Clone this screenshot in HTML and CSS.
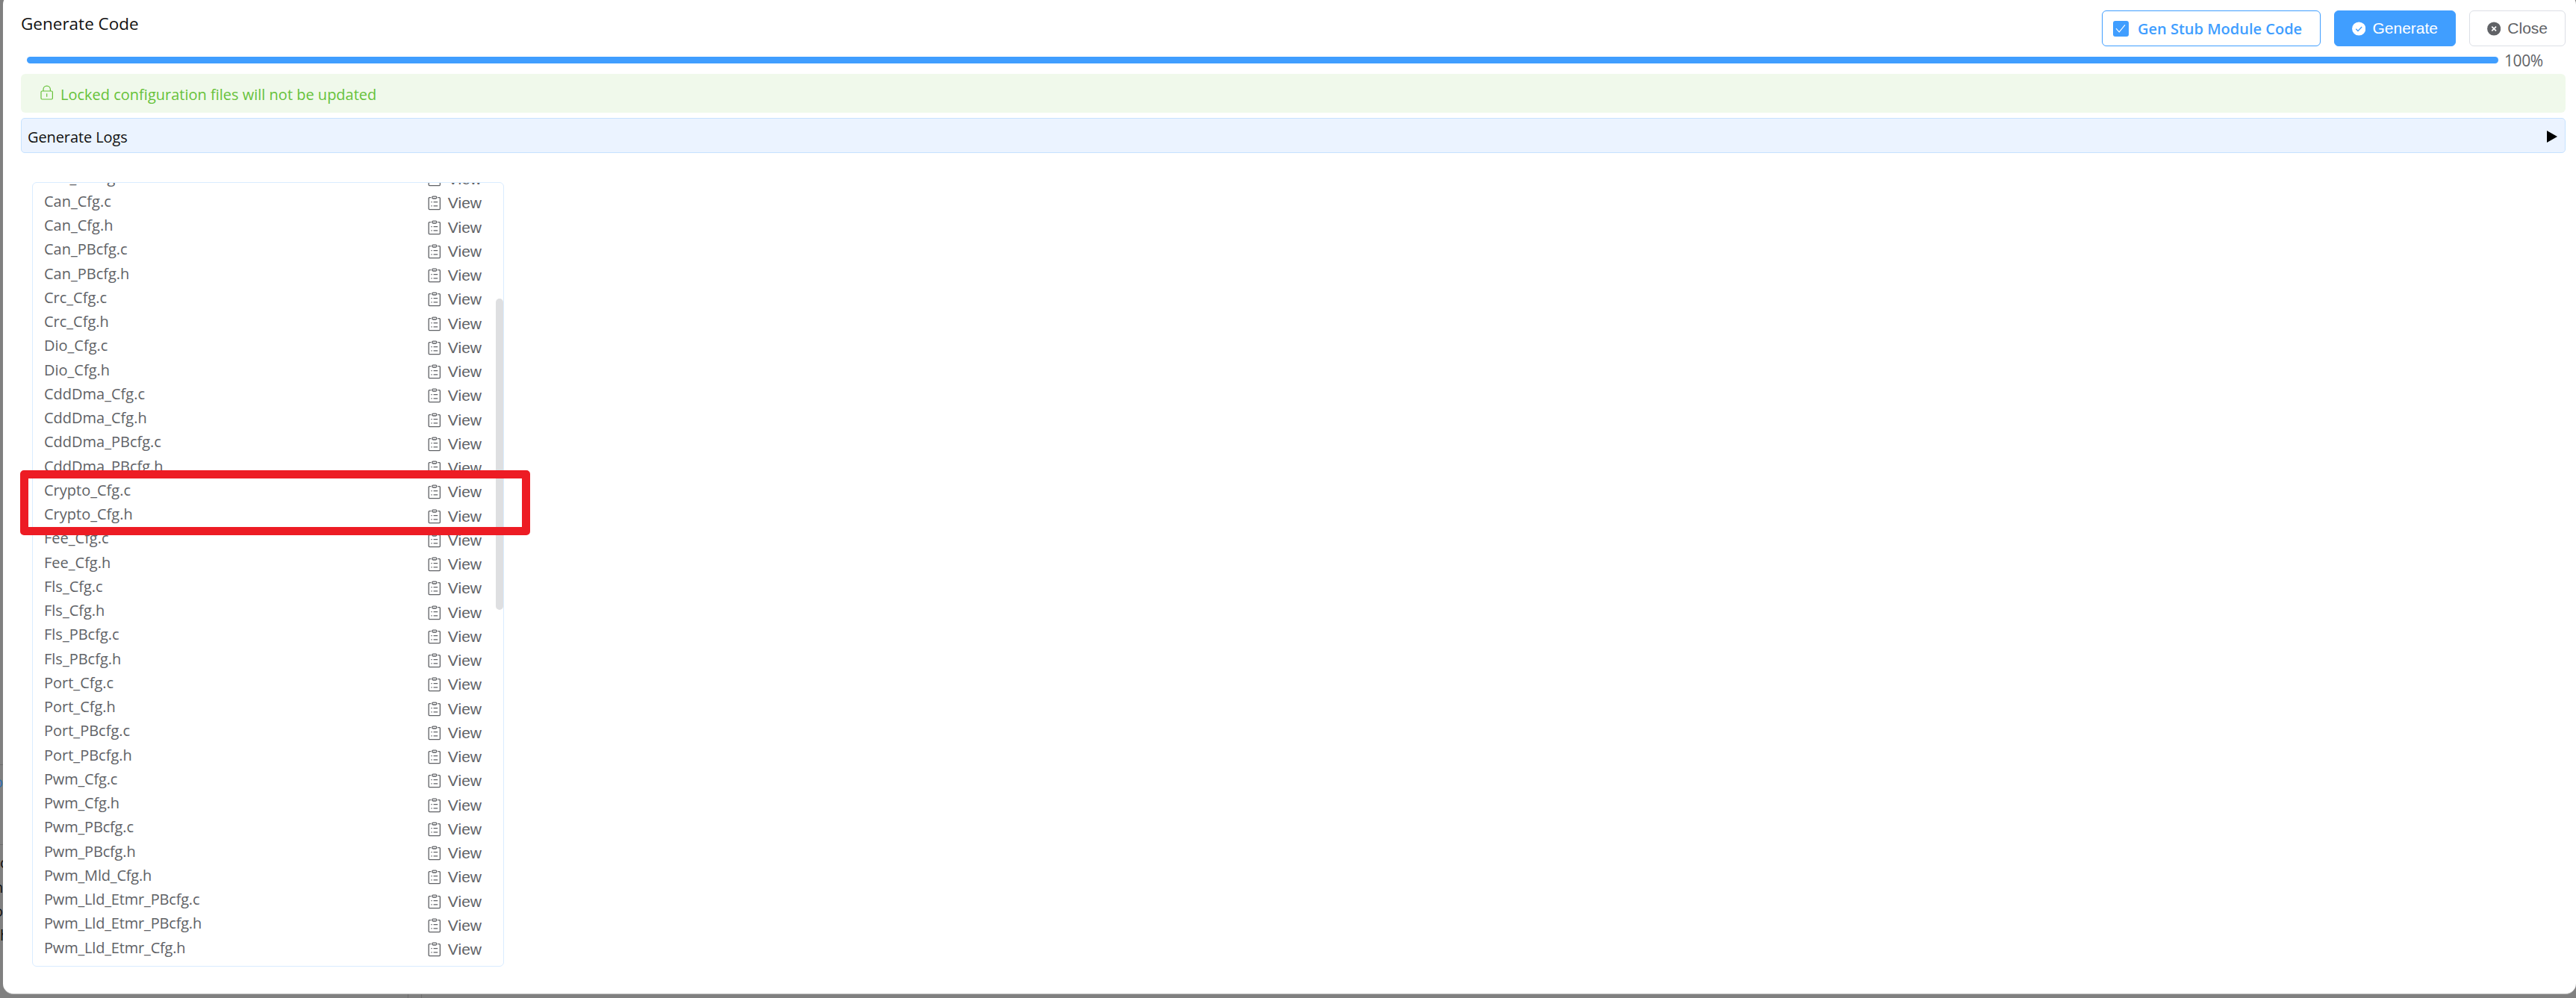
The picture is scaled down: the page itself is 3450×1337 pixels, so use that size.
FILE: index.html
```html
<!DOCTYPE html>
<html lang="en">
<head>
    <meta charset="UTF-8">
    <meta name="viewport" content="width=device-width, initial-scale=1.0">
    <title>Generate Code</title>

    <link rel="stylesheet" href="styles.css">
</head>
<body>
    <!-- page behind the dialog -->
    <div class="behind">
        <div class="behind-line line-a"></div>
        <div class="behind-line line-b"></div>
        <span class="behind-text link">o</span>
        <span class="behind-text t1">c</span>
        <span class="behind-text t2">n</span>
        <span class="behind-text t3">o</span>
        <span class="behind-text t4">h</span>
        <div class="behind-split"></div>
    </div>

    <div class="dialog">
        <div class="header">
            <div class="title">Generate Code</div>
            <div class="buttons">
                <label class="btn check-btn">
                    <span class="check-box">
                        <svg viewBox="0 0 21 21"><path d="M4 10.2l4.2 4.6L16 5.4"/></svg>
                    </span>
                    <span class="check-label">Gen Stub Module Code</span>
                </label>
                <button class="btn primary">
                    <svg class="icon" viewBox="0 0 19 19">
                        <circle cx="9.5" cy="9.5" r="9.4" fill="#fff"/>
                        <path d="M5.5 9.8l2.7 2.7 5.4-5.5" fill="none" stroke="#409eff" stroke-width="1.4"/>
                    </svg>
                    <span>Generate</span>
                </button>
                <button class="btn close">
                    <svg class="icon" viewBox="0 0 19 19">
                        <circle cx="9.5" cy="9.5" r="9.4" fill="#606266"/>
                        <path d="M6.5 6.5l6 6M12.5 6.5l-6 6" fill="none" stroke="#fff" stroke-width="1.7"/>
                    </svg>
                    <span>Close</span>
                </button>
            </div>
        </div>

        <div class="progress">
            <div class="progress-bar"></div>
            <div class="progress-text">100%</div>
        </div>

        <div class="alert">
            <svg class="lock" viewBox="0 0 18 20">
                <rect x="1" y="8" width="15.4" height="11" rx="1.5"/>
                <path d="M4 8V5.8a4.7 4.7 0 0 1 9.4 0V8M8.7 11.3v4.4"/>
            </svg>
            <span>Locked configuration files will not be updated</span>
        </div>

        <div class="logs">
            <span>Generate Logs</span>
            <span class="arrow"></span>
        </div>

        <div class="file-box">
            <div id="list"></div>
            <div class="scrollbar"></div>
            <div class="mark"></div>
        </div>
    </div>

    <svg width="0" height="0" class="defs">
        <symbol id="view-icon" viewBox="0 0 18 20">
            <g fill="none" stroke="#606266" stroke-width="1.3">
                <path d="M4.2 2.7H2.2A1 1 0 0 0 1.2 3.7V17.6A1 1 0 0 0 2.2 18.6H15.4A1 1 0 0 0 16.4 17.6V3.7A1 1 0 0 0 15.4 2.7H13.4"/>
                <rect x="5.7" y="1.2" width="6.2" height="2.8" rx="1.4"/>
                <path d="M4.3 8.6h1.4M7.6 8.6h5.6M4.3 13.9h1.4M7.6 13.9h5.6"/>
            </g>
        </symbol>
    </svg>

    <script>
        let files = [
            "Adc_PBcfg.h",
            "Can_Cfg.c", "Can_Cfg.h", "Can_PBcfg.c", "Can_PBcfg.h",
            "Crc_Cfg.c", "Crc_Cfg.h",
            "Dio_Cfg.c", "Dio_Cfg.h",
            "CddDma_Cfg.c", "CddDma_Cfg.h", "CddDma_PBcfg.c", "CddDma_PBcfg.h",
            "Crypto_Cfg.c", "Crypto_Cfg.h",
            "Fee_Cfg.c", "Fee_Cfg.h",
            "Fls_Cfg.c", "Fls_Cfg.h", "Fls_PBcfg.c", "Fls_PBcfg.h",
            "Port_Cfg.c", "Port_Cfg.h", "Port_PBcfg.c", "Port_PBcfg.h",
            "Pwm_Cfg.c", "Pwm_Cfg.h", "Pwm_PBcfg.c", "Pwm_PBcfg.h", "Pwm_Mld_Cfg.h",
            "Pwm_Lld_Etmr_PBcfg.c", "Pwm_Lld_Etmr_PBcfg.h", "Pwm_Lld_Etmr_Cfg.h",
            "Spi_Cfg.c"
        ];
        let list = document.getElementById("list");

        for (let i = 0; i < files.length; i++) {
            let row = document.createElement("div");
            row.className = files[i].startsWith("Pwm") ? "file-row pwm" : "file-row";
            row.innerHTML = '<span class="file-name">' + files[i] + '</span>' +
                '<span class="view"><svg class="view-icon"><use href="#view-icon"/></svg>View</span>';
            list.appendChild(row);
        }
    </script>
</body>
</html>
```
FILE: styles.css
```css
* {
    margin: 0;
    padding: 0;
    box-sizing: border-box;
}

body {
    height: 1337px;
    overflow: hidden;
    background-color: #808080;
    font-family: "Open Sans", "Noto Sans", sans-serif;
    font-size: 20px;
    color: #606266;
}

.defs {
    position: absolute;
}

/* page behind the dialog */
.behind {
    position: absolute;
    left: 0;
    top: 0;
    width: 3450px;
    height: 1337px;
    overflow: hidden;
}

.behind-line {
    position: absolute;
    left: 0;
    width: 4px;
    height: 1px;
    background-color: #6e6e6e;
}

.line-a {
    top: 1024px;
}

.line-b {
    top: 1131px;
}

.behind-text {
    position: absolute;
    left: -8px;
    line-height: 28px;
    color: #111;
}

.behind-text.link {
    top: 1034px;
    color: #2f6fb5;
}

.behind-text.t1 {
    left: 0;
    top: 1142px;
}

.behind-text.t2 {
    top: 1175px;
}

.behind-text.t3 {
    top: 1207px;
}

.behind-text.t4 {
    left: 0;
    top: 1239px;
}

.behind-split {
    position: absolute;
    left: 546px;
    top: 1331px;
    width: 19px;
    height: 6px;
    border: solid #6e6e6e;
    border-width: 0 1px;
}

.dialog {
    position: relative;
    height: 1340px;
    margin: -8px 0 0 4px;
    padding: 22px 14px 0 24px;
    border-radius: 14px;
    border-bottom: 1px solid #bfbfbf;
    background-color: #fff;
}

/* header */
.header {
    display: flex;
    justify-content: space-between;
    height: 48px;
}

.title {
    color: #111;
    font-size: 22.5px;
    line-height: 35px;
}

.buttons {
    display: flex;
    gap: 18px;
}

.btn {
    display: flex;
    align-items: center;
    height: 48px;
    padding: 0 23px;
    border: 1px solid #dcdfe6;
    border-radius: 6px;
    background-color: #fff;
    font-family: "Liberation Sans", Arial, sans-serif;
    font-size: 21px;
    line-height: 46px;
    color: #606266;
}

.btn .icon {
    width: 19px;
    height: 19px;
    margin-right: 9px;
}

.btn.primary {
    width: 163px;
    border-color: #409eff;
    background-color: #409eff;
    color: #fff;
}

.btn.close {
    width: 129px;
}

.btn.check-btn {
    width: 293px;
    padding: 0 14px;
    border-color: #409eff;
    color: #409eff;
    font-family: "Open Sans", "Noto Sans", sans-serif;
    font-size: 20px;
    font-weight: 600;
}

.check-box {
    display: flex;
    width: 21px;
    height: 21px;
    margin-right: 12px;
    border-radius: 3px;
    background-color: #409eff;
}

.check-box svg {
    width: 21px;
    height: 21px;
    fill: none;
    stroke: #fff;
    stroke-width: 1.1;
}

.check-label {
    padding-top: 2px;
}

/* progress */
.progress {
    display: flex;
    align-items: center;
    height: 37px;
    padding-left: 8px;
}

.progress-bar {
    width: 3310px;
    height: 9px;
    border-radius: 5px;
    background-color: #409eff;
}

.progress-text {
    padding: 1px 0 0 8px;
    font-size: 21px;
    letter-spacing: -0.4px;
}

.alert {
    display: flex;
    align-items: center;
    height: 52px;
    padding-left: 26px;
    border-radius: 6px;
    background-color: #f0f9eb;
    color: #67c23a;
}

.alert .lock {
    width: 18px;
    height: 20px;
    margin: -3px 9px 0 0;
    fill: none;
    stroke: #67c23a;
    stroke-width: 1.2;
}

.alert span {
    padding-top: 3px;
}

.logs {
    display: flex;
    justify-content: space-between;
    align-items: center;
    height: 47px;
    margin-top: 7px;
    padding: 3px 10px 0 8px;
    border: 1px solid #c6e2ff;
    border-radius: 5px;
    background-color: #ebf3ff;
    color: #111;
}

.logs span {
    letter-spacing: -0.1px;
}

.logs .arrow {
    border: solid transparent;
    border-width: 8px 0 8px 14px;
    border-left-color: #000;
}

/* file list */
.file-box {
    position: relative;
    width: 632px;
    height: 1051px;
    margin: 39px 0 0 15px;
    border: 1px solid #d9ecff;
    border-radius: 6px;
}

#list {
    height: 1049px;
    overflow: hidden;
}

.file-row {
    display: flex;
    justify-content: space-between;
    height: 32.26px;
    padding: 0 29px 0 15px;
    line-height: 32.26px;
}

/* the box is scrolled part way into a row */
.file-row:first-child {
    margin-top: -23.5px;
}

.file-row.pwm {
    letter-spacing: -0.18px;
}

.view {
    display: flex;
    align-items: center;
    padding-top: 5px;
    font-family: "Liberation Sans", Arial, sans-serif;
    font-size: 21px;
    letter-spacing: 0;
}

.view-icon {
    width: 18px;
    height: 20px;
    margin-right: 9px;
}

.scrollbar {
    position: absolute;
    left: 620px;
    top: 155px;
    width: 10px;
    height: 417px;
    border-radius: 5px;
    background-color: #dedfe1;
}

/* red frame over the Crypto rows */
.mark {
    position: absolute;
    left: -17px;
    top: 385px;
    width: 683px;
    height: 87px;
    border: 11px solid #ed1c24;
    border-radius: 5px;
}
```
